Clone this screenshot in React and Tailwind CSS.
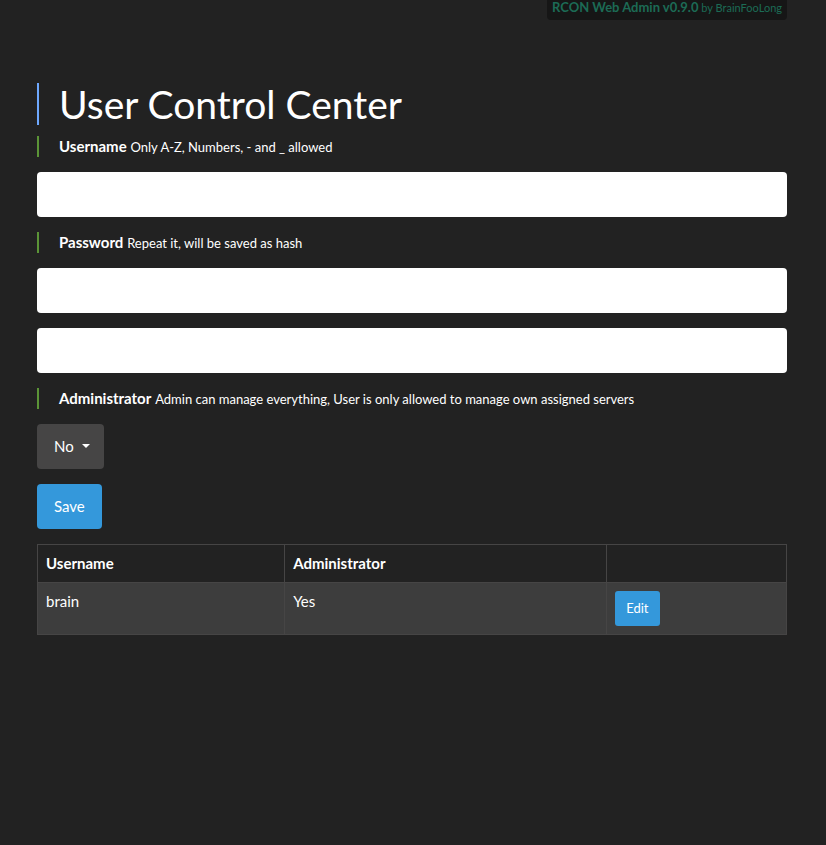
import { useState } from "react";

function Field({ id, title, hint, children }) {
  return (
    <section className="flex flex-col items-start gap-[15px]">
      <label
        htmlFor={id}
        className="block border-l-2 border-[#5b9437] pl-5 leading-[21px]"
      >
        <strong className="font-bold">{title}</strong>{" "}
        <span className="text-[13px] leading-none">{hint}</span>
      </label>
      {children}
    </section>
  );
}

function TextInput(props) {
  return (
    <input
      {...props}
      className="h-[45px] w-full rounded border-0 bg-white px-4 text-[15px] text-[#464545] outline-none"
    />
  );
}

function UserTable({ users }) {
  return (
    <table className="w-full table-fixed border-collapse text-left leading-[21px]">
      <thead>
        <tr>
          <th className="w-[33%] border border-[#464545] p-2 font-bold">Username</th>
          <th className="w-[43%] border border-[#464545] p-2 font-bold">Administrator</th>
          <th className="border border-[#464545] p-2"></th>
        </tr>
      </thead>
      <tbody>
        {users.map((user) => (
          <tr key={user.name} className="bg-[#3d3d3d] align-top">
            <td className="border border-[#464545] p-2">{user.name}</td>
            <td className="border border-[#464545] p-2">{user.admin}</td>
            <td className="border border-[#464545] p-2">
              <button
                type="button"
                className="block h-[35px] rounded-[3px] bg-[#3498db] px-[11px] text-[13px]"
              >
                Edit
              </button>
            </td>
          </tr>
        ))}
      </tbody>
    </table>
  );
}

export default function App() {
  const [admin, setAdmin] = useState("No");

  return (
    <div className="min-h-screen bg-[#222222] pr-[39px] pl-[37px] font-['Lato',sans-serif] text-[15px] text-white">
      <header className="flex justify-end">
        <div className="h-5 rounded-b bg-[#161616] px-[5px] text-[11px] leading-[14px] text-[#1c6b55]">
          <strong className="text-[13px] font-bold">RCON Web Admin v0.9.0</strong>{" "}
          by <a href="#author">BrainFooLong</a>
        </div>
      </header>

      <main className="pt-[63px]">
        <h1 className="mb-[11px] border-l-2 border-[#6ea8fe] pl-5 text-[39px] leading-[42px]">
          User Control Center
        </h1>

        <form className="mb-[15px] flex flex-col items-stretch gap-[15px]">
          <Field
            id="username"
            title="Username"
            hint="Only A-Z, Numbers, - and _ allowed"
          >
            <TextInput id="username" type="text" />
          </Field>

          <Field id="password" title="Password" hint="Repeat it, will be saved as hash">
            <TextInput id="password" type="password" />
            <TextInput type="password" aria-label="Repeat password" />
          </Field>

          <Field
            id="admin"
            title="Administrator"
            hint="Admin can manage everything, User is only allowed to manage own assigned servers"
          >
            <div className="relative">
              <select
                id="admin"
                value={admin}
                onChange={(event) => setAdmin(event.target.value)}
                className="block h-[45px] w-[67px] appearance-none rounded bg-[#464545] pl-[17px] text-[15px] text-white"
              >
                <option>No</option>
                <option>Yes</option>
              </select>
              <svg
                viewBox="0 0 8 4"
                className="pointer-events-none absolute top-5 right-[14px] h-1 w-2"
                fill="currentColor"
                aria-hidden="true"
              >
                <path d="M0 0h8L4 4z" />
              </svg>
            </div>
          </Field>

          <button
            type="submit"
            className="h-[45px] self-start rounded bg-[#3498db] px-[17px]"
          >
            Save
          </button>
        </form>

        <UserTable users={[{ name: "brain", admin: "Yes" }]} />
      </main>
    </div>
  );
}
